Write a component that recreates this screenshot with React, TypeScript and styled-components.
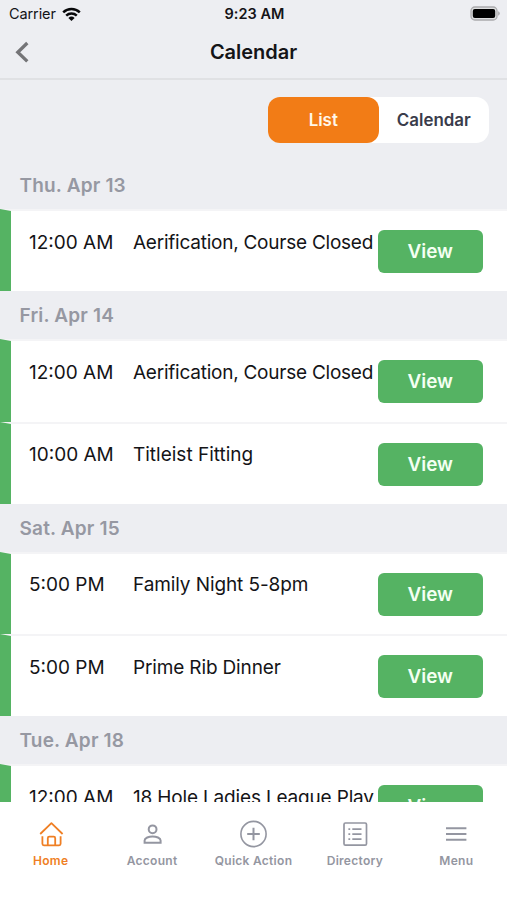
import React from "react";
import styled, { createGlobalStyle } from "styled-components";

const Global = createGlobalStyle`
  * { box-sizing: border-box; }
  body { margin: 0; background: #fff; font-family: Inter, "Liberation Sans", sans-serif; }
  button { font-family: inherit; border: 0; padding: 0; }
`;

const Screen = styled.div`
  width: 507px;
  height: 900px;
  display: flex;
  flex-direction: column;
  overflow: hidden;
  background: #edeef2;
  color: #141417;
`;

const StatusBar = styled.div`
  height: 28px;
  flex: none;
  display: grid;
  grid-template-columns: 1fr auto 1fr;
  align-items: center;
  padding: 0 7px 0 9px;
  font-size: 14.5px;
  line-height: 28px;
`;

const Carrier = styled.div`
  display: flex;
  align-items: center;
  gap: 6px;
  height: 26px;
  letter-spacing: -0.1px;
`;

const Clock = styled.div`
  font-weight: 600;
  font-size: 14.5px;
  letter-spacing: 0.05px;
`;

const Battery = styled.svg`
  justify-self: end;
  display: block;
  margin-bottom: 1px;
`;

const NavBar = styled.header`
  height: 52px;
  flex: none;
  display: grid;
  grid-template-columns: 60px 1fr 60px;
  align-items: center;
  padding-bottom: 3px;
  border-bottom: 2px solid #e0e1e4;
`;

const Back = styled.button`
  background: none;
  height: 24px;
  padding-left: 14px;
  text-align: left;
`;

const Title = styled.h1`
  margin: 0;
  text-align: center;
  font-size: 20px;
  font-weight: 600;
  line-height: 28px;
  letter-spacing: -0.03px;
`;

const Content = styled.main`
  flex: 1;
  min-height: 0;
  overflow: hidden;
`;

const SegmentRow = styled.div`
  height: 81px;
  padding: 17px 18px 0 0;
  display: flex;
  justify-content: flex-end;
`;

const Segments = styled.div`
  display: flex;
  width: 221px;
  height: 46px;
  border-radius: 13px;
  background: #fff;
`;

const Segment = styled.button<{ $active?: boolean }>`
  flex: 1;
  border-radius: 12px;
  background: ${(p) => (p.$active ? "#f27c16" : "transparent")};
  color: ${(p) => (p.$active ? "#fff6e9" : "#3a3c4b")};
  font-size: 16.9px;
  font-weight: 600;
`;

const DayTitle = styled.h2`
  margin: 0;
  height: 48px;
  padding: 1px 0 0 19.5px;
  font-size: 19px;
  font-weight: 600;
  line-height: 48px;
  letter-spacing: 0.18px;
  color: #9698a2;
`;

const EventRow = styled.div`
  height: 82.3px;
  display: grid;
  grid-template-columns: 104px minmax(0, 1fr) 129px;
  padding-left: 18px;
  background: #fff;
  background-clip: padding-box;
  border-left: 11px solid #55b363;
  border-top: 2px solid #f4f4f6;
  font-size: 19px;
  line-height: 28px;
`;

const EventText = styled.div<{ $spacing?: number }>`
  padding-top: 17.6px;
  white-space: nowrap;
  letter-spacing: ${(p) => p.$spacing ?? 0}px;
`;

const ViewButton = styled.button`
  width: 104.5px;
  height: 43px;
  margin-top: 19px;
  border-radius: 6px;
  background: #55b363;
  color: #f4fff2;
  font-size: 18.9px;
  font-weight: 600;
`;

const TabBar = styled.nav`
  height: 98px;
  flex: none;
  display: grid;
  grid-template-columns: repeat(5, 1fr);
  background: #fff;
`;

const Tab = styled.div<{ $active?: boolean }>`
  display: flex;
  flex-direction: column;
  align-items: center;
  padding-top: 16px;
  color: ${(p) => (p.$active ? "#ef7f24" : "#9496a1")};
  font-size: 12px;
  font-weight: 600;
  line-height: 16px;
  letter-spacing: 0.28px;
  white-space: nowrap;
  svg { display: block; margin-bottom: 3px; }
`;

type Event = { time: string; name: string; spacing?: number };

const days: { day: string; events: Event[] }[] = [
  { day: "Thu. Apr 13", events: [{ time: "12:00 AM", name: "Aerification, Course Closed", spacing: -0.24 }] },
  {
    day: "Fri. Apr 14",
    events: [
      { time: "12:00 AM", name: "Aerification, Course Closed", spacing: -0.24 },
      { time: "10:00 AM", name: "Titleist Fitting" },
    ],
  },
  {
    day: "Sat. Apr 15",
    events: [
      { time: "5:00 PM", name: "Family Night 5-8pm", spacing: -0.1 },
      { time: "5:00 PM", name: "Prime Rib Dinner", spacing: -0.15 },
    ],
  },
  { day: "Tue. Apr 18", events: [{ time: "12:00 AM", name: "18 Hole Ladies League Play", spacing: -0.17 }] },
];

const icons = {
  Home: (
    <path
      strokeWidth="1.8"
      strokeLinejoin="round"
      d="M5.2 16 16.4 5.2 27.6 16M7.4 18.2v7.6q0 1.5 1.5 1.5h15.2q1.5 0 1.5-1.5v-7.6M12.8 27v-6.8q0-1.5 1.5-1.5h4.4q1.5 0 1.5 1.5V27"
    />
  ),
  Account: (
    <>
      <circle cx="16.6" cy="11.3" r="3.9" />
      <path d="M8.6 24.8v-2.2c0-2.7 4.3-4.2 8-4.2s8 1.5 8 4.2v2.2Z" />
    </>
  ),
  "Quick Action": (
    <>
      <circle cx="16.5" cy="16" r="12.6" strokeWidth="1.6" />
      <path d="M16.5 9.7v12.6M10.2 16h12.6" />
    </>
  ),
  Directory: (
    <>
      <rect x="5" y="5" width="22.5" height="22.2" rx="1.4" strokeWidth="1.7" />
      <path strokeWidth="1.8" d="M13.3 11.2h9.2M13.3 16.2h9.2M13.3 21.2h9.2M9.4 11.2h1.8M9.4 16.2h1.8M9.4 21.2h1.8" />
    </>
  ),
  Menu: <path d="M6 10.2h20.4M6 16.1h20.4M6 21.8h20.4" />,
};

export default function App() {
  return (
    <>
      <Global />
      <Screen>
        <StatusBar>
          <Carrier>
            Carrier
            <svg width="19" height="15" viewBox="0 0 19 15" fill="none" stroke="#08080a" strokeWidth="2.5">
              <path d="M1.2 5.3a12.2 12.2 0 0 1 16.6 0M4.2 8.6a7.8 7.8 0 0 1 10.6 0" />
              <path d="M9.5 14 6.4 10.9a4.6 4.6 0 0 1 6.2 0Z" fill="#08080a" stroke="none" />
            </svg>
          </Carrier>
          <Clock>9:23 AM</Clock>
          <Battery width="30" height="15" viewBox="0 0 30 15">
            <rect x="1" y="1" width="26" height="13" rx="3.8" fill="#dedfe0" stroke="#ababad" strokeWidth="1.3" />
            <rect x="2.8" y="2.9" width="22.4" height="9.2" rx="2" fill="#000" />
            <path d="M28.1 5.3q1.7.6 1.7 2.2t-1.7 2.2Z" fill="#ababad" />
          </Battery>
        </StatusBar>
        <NavBar>
          <Back aria-label="Back">
            <svg width="16" height="24" viewBox="0 0 16 24" fill="none" stroke="#747477" strokeWidth="3.3">
              <path d="M13.3 3 3.8 12.2l9.5 9.2" />
            </svg>
          </Back>
          <Title>Calendar</Title>
        </NavBar>
        <Content>
          <SegmentRow>
            <Segments>
              <Segment $active>List</Segment>
              <Segment>Calendar</Segment>
            </Segments>
          </SegmentRow>
          {days.map(({ day, events }) => (
            <section key={day}>
              <DayTitle>{day}</DayTitle>
              {events.map(({ time, name, spacing }) => (
                <EventRow key={time + name}>
                  <EventText>{time}</EventText>
                  <EventText $spacing={spacing}>{name}</EventText>
                  <ViewButton>View</ViewButton>
                </EventRow>
              ))}
            </section>
          ))}
        </Content>
        <TabBar>
          {Object.entries(icons).map(([label, icon]) => (
            <Tab key={label} $active={label === "Home"}>
              <svg width="32" height="32" viewBox="0 0 32 32" fill="none" stroke="currentColor" strokeWidth="2">
                {icon}
              </svg>
              {label}
            </Tab>
          ))}
        </TabBar>
      </Screen>
    </>
  );
}
